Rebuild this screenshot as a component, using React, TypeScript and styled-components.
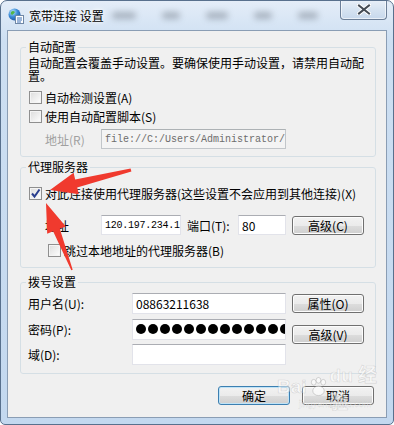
import React from "react";
import styled, { createGlobalStyle } from "styled-components";

const GlobalStyle = createGlobalStyle`
  html, body {
    margin: 0;
    padding: 0;
    background: #ffffff;
  }
  * {
    box-sizing: border-box;
  }
`;

const UI_FONT = `"Noto Sans CJK SC", "Liberation Sans", sans-serif`;

type Pt = [number, number];

// fat tapered arrow, as drawn over the screenshot
const arrowPoints = (
  tail: Pt,
  tip: Pt,
  headLen: number,
  headHalf: number,
  shaftTail: number,
  shaftHead: number
): string => {
  const dx = tip[0] - tail[0];
  const dy = tip[1] - tail[1];
  const len = Math.hypot(dx, dy);
  const ux = dx / len;
  const uy = dy / len;
  const nx = -uy;
  const ny = ux;
  const bx = tip[0] - ux * headLen;
  const by = tip[1] - uy * headLen;
  const pts: Pt[] = [
    [tail[0] + nx * shaftTail, tail[1] + ny * shaftTail],
    [bx + nx * shaftHead, by + ny * shaftHead],
    [bx + nx * headHalf, by + ny * headHalf],
    tip,
    [bx - nx * headHalf, by - ny * headHalf],
    [bx - nx * shaftHead, by - ny * shaftHead],
    [tail[0] - nx * shaftTail, tail[1] - ny * shaftTail],
  ];
  return pts.map((p) => `${p[0].toFixed(1)},${p[1].toFixed(1)}`).join(" ");
};

const PASSWORD_LENGTH = 14;

const App: React.FunctionComponent = (): React.ReactElement => {
  return (
    <>
      <GlobalStyle />
      <Window>
        <TitleBar>
          <TitleIcon />
          <Title>宽带连接 设置</Title>
          <Smudges>
            <Smudge $w={24} />
            <Smudge $w={18} />
            <Smudge $w={22} />
            <Smudge $w={18} />
            <Smudge $w={20} />
          </Smudges>
          <CloseButton aria-label="关闭">
            <CloseGlyph />
          </CloseButton>
        </TitleBar>

        <Client>
          <GroupBox $mb={2}>
            <Legend>自动配置</Legend>
            <Description>
              <span>自动配置会覆盖手动设置。要确保使用手动设置，请禁用自动配</span>
              <span>置。</span>
            </Description>
            <CheckList>
              <CheckRow>
                <CheckBox />
                <span>自动检测设置(A)</span>
              </CheckRow>
              <CheckRow>
                <CheckBox />
                <span>使用自动配置脚本(S)</span>
              </CheckRow>
            </CheckList>
            <FieldRow $indent={17} $mt={3}>
              <FieldLabel $disabled>地址(R)</FieldLabel>
              <TextBox $w={185} $disabled $mono>
                file://C:/Users/Administrator/
              </TextBox>
            </FieldRow>
          </GroupBox>

          <GroupBox $mb={6}>
            <Legend>代理服务器</Legend>
            <CheckRow $mt={9}>
              <CheckBox $checked />
              <span>对此连接使用代理服务器(这些设置不会应用到其他连接)(X)</span>
            </CheckRow>
            <FieldRow $indent={17} $mt={12}>
              <FieldLabel>地址</FieldLabel>
              <TextBox $w={80} $mono $tight>
                120.197.234.1
              </TextBox>
              <PortLabel>端口(T):</PortLabel>
              <TextBox $w={48}>80</TextBox>
              <PushButton $ml={6}>高级(C)</PushButton>
            </FieldRow>
            <CheckRow $indent={19} $mt={6}>
              <CheckBox />
              <span>跳过本地地址的代理服务器(B)</span>
            </CheckRow>
          </GroupBox>

          <GroupBox>
            <Legend>拨号设置</Legend>
            <DialGrid>
              <span>用户名(U):</span>
              <TextBox $w={154} $h={21}>
                08863211638
              </TextBox>
              <PushButton>属性(O)</PushButton>
              <span>密码(P):</span>
              <TextBox $w={154} $h={21} aria-label="密码">
                {Array.from({ length: PASSWORD_LENGTH }, (_, i) => (
                  <Dot key={i} />
                ))}
              </TextBox>
              <PushButton $offset={6}>高级(V)</PushButton>
              <span>域(D):</span>
              <TextBox $w={154} $h={21} />
            </DialGrid>
          </GroupBox>

          <Footer>
            <PushButton $default>确定</PushButton>
            <PushButton>取消</PushButton>
          </Footer>
        </Client>

        <Watermark aria-hidden>
          <WatermarkMain>
            Bai<Paw />du 经验
          </WatermarkMain>
          <WatermarkSub>jingyan.baidu.com</WatermarkSub>
        </Watermark>

        <ArrowLayer width={394} height={425} viewBox="0 0 394 425">
          <polygon
            points={arrowPoints([131, 170], [50, 190], 27, 11, 1.6, 4.2)}
            fill="#f03a2e"
          />
          <polygon
            points={arrowPoints([72, 270], [46, 203], 29, 10, 0.7, 3.6)}
            fill="#f03a2e"
          />
        </ArrowLayer>
      </Window>
    </>
  );
};

const TitleIcon: React.FunctionComponent = () => (
  <svg width="16" height="16" viewBox="0 0 16 16">
    <defs>
      <radialGradient id="globe" cx="0.35" cy="0.3" r="0.8">
        <stop offset="0" stopColor="#bfe8ff" />
        <stop offset="0.5" stopColor="#3a8ad6" />
        <stop offset="1" stopColor="#1d4f9a" />
      </radialGradient>
    </defs>
    <circle cx="6.5" cy="6.5" r="6" fill="url(#globe)" />
    <path d="M3 4 Q5 2 7 4 Q6 6 4 7 Q2 6 3 4Z" fill="#52b548" />
    <path d="M8 7 Q10 6 11 8 Q10 10 8 10Z" fill="#52b548" />
    <rect x="7.5" y="7.5" width="8" height="8" fill="#ffffff" stroke="#6f87a6" />
    <path d="M9 10h5M9 12h5M9 14h4" stroke="#3b6fb6" strokeWidth="1" />
  </svg>
);

const CloseGlyph: React.FunctionComponent = () => (
  <svg width="14" height="11" viewBox="0 0 14 11">
    <path
      d="M1.5 1 L12.5 10 M12.5 1 L1.5 10"
      stroke="#ffffff"
      strokeWidth="4"
      strokeLinecap="round"
    />
    <path
      d="M2 1.5 L12 9.5 M12 1.5 L2 9.5"
      stroke="#454c55"
      strokeWidth="2"
      strokeLinecap="square"
    />
  </svg>
);

const Paw: React.FunctionComponent = () => (
  <svg width="22" height="22" viewBox="0 0 22 22" style={{ margin: "0 1px" }}>
    <g fill="rgba(255,255,255,0.6)" stroke="rgba(120,120,120,0.3)">
      <ellipse cx="6" cy="6" rx="2.5" ry="3" />
      <ellipse cx="11" cy="4" rx="2.5" ry="3" />
      <ellipse cx="16" cy="6" rx="2.5" ry="3" />
      <ellipse cx="11" cy="15" rx="6" ry="5" />
    </g>
  </svg>
);

const CheckBox: React.FunctionComponent<{ $checked?: boolean }> = ({
  $checked,
}) => (
  <Box>
    {$checked && (
      <svg width="11" height="11" viewBox="0 0 11 11">
        <path
          d="M2 5.5 L4.5 8.5 L9.5 1.5"
          fill="none"
          stroke="#2a3f8f"
          strokeWidth="2"
        />
      </svg>
    )}
  </Box>
);

const Window = styled.div`
  position: relative;
  width: 394px;
  height: 425px;
  display: flex;
  flex-direction: column;
  border: 1px solid #58708d;
  border-radius: 7px 7px 5px 5px;
  background: linear-gradient(180deg, #e4edf8 0%, #cddff2 40px, #c3d8ef 100%);
  overflow: hidden;
  font-family: ${UI_FONT};
  font-size: 12px;
  color: #000000;
`;

const TitleBar = styled.div`
  height: 29px;
  display: flex;
  align-items: center;
  padding-left: 7px;
  flex-shrink: 0;
`;

const Title = styled.span`
  margin-left: 5px;
  font-size: 12px;
  color: #000000;
  text-shadow: 0 0 6px #ffffff, 0 0 3px #ffffff;
`;

const Smudges = styled.div`
  display: flex;
  gap: 26px;
  margin-left: 8px;
`;

const Smudge = styled.span<{ $w: number }>`
  width: ${(p) => p.$w}px;
  height: 7px;
  border-radius: 4px;
  background: rgba(70, 78, 90, 0.35);
  filter: blur(3px);
`;

const CloseButton = styled.div`
  align-self: flex-start;
  margin: -1px 6px 0 auto;
  width: 47px;
  height: 20px;
  display: flex;
  align-items: center;
  justify-content: center;
  border: 1px solid #6c7f98;
  border-top: none;
  border-radius: 0 0 4px 4px;
  background: linear-gradient(180deg, #e9f0f8 0%, #d6e3f1 50%, #c7d8ec 100%);
  box-shadow: inset 0 0 0 1px rgba(255, 255, 255, 0.6);
`;

const Client = styled.div`
  flex: 1;
  margin: 0 6px 6px 6px;
  border: 1px solid #8a9db4;
  background: #f0f0f0;
  padding: 8px 10px 0 12px;
  display: flex;
  flex-direction: column;
`;

const GroupBox = styled.fieldset<{ $mb?: number }>`
  margin: 0 0 ${(p) => p.$mb ?? 0}px 0;
  padding: 0 11px 7px 7px;
  border: 1px solid #d5dfe5;
  border-radius: 3px;
  min-width: 0;
`;

const Legend = styled.legend`
  padding: 0 2px;
  margin-left: -2px;
  line-height: 16px;
`;

const Description = styled.p`
  margin: 1px 0 0 0;
  display: flex;
  flex-direction: column;
  white-space: nowrap;

  span {
    height: 13px;
    line-height: 13px;
  }
`;

const CheckList = styled.div`
  margin-top: 6px;
  display: flex;
  flex-direction: column;
`;

const CheckRow = styled.label<{ $indent?: number; $mt?: number }>`
  display: flex;
  align-items: center;
  gap: 3px;
  height: 19px;
  margin-left: ${(p) => (p.$indent ?? 0) + 1}px;
  margin-top: ${(p) => p.$mt ?? 0}px;
  white-space: nowrap;
`;

const Box = styled.span`
  width: 13px;
  height: 13px;
  flex-shrink: 0;
  display: flex;
  align-items: center;
  justify-content: center;
  border: 1px solid #8f8f8f;
  background: linear-gradient(135deg, #dcdcdc 0%, #f4f4f4 70%, #ffffff 100%);
  box-shadow: inset 0 0 0 1px #f4f4f4;
`;

const FieldRow = styled.div<{ $indent?: number; $mt?: number }>`
  display: flex;
  align-items: center;
  margin-left: ${(p) => p.$indent ?? 0}px;
  margin-top: ${(p) => p.$mt ?? 0}px;
`;

const FieldLabel = styled.span<{ $disabled?: boolean }>`
  width: 56px;
  color: ${(p) => (p.$disabled ? "#a0a0a0" : "#000000")};
`;

const PortLabel = styled.span`
  margin-left: 6px;
  width: 51px;
`;

const TextBox = styled.div<{
  $w: number;
  $h?: number;
  $disabled?: boolean;
  $mono?: boolean;
  $tight?: boolean;
}>`
  width: ${(p) => p.$w}px;
  height: ${(p) => p.$h ?? 20}px;
  display: flex;
  align-items: center;
  gap: 2px;
  padding: 0 2px 0 3px;
  overflow: hidden;
  white-space: nowrap;
  border: 1px solid ${(p) => (p.$disabled ? "#c2c6ca" : "#e2e3ea")};
  border-top-color: ${(p) => (p.$disabled ? "#adb2b5" : "#abadb3")};
  background: ${(p) => (p.$disabled ? "#f4f4f4" : "#ffffff")};
  color: ${(p) => (p.$disabled ? "#6d6d6d" : "#000000")};
  font-family: ${(p) =>
    p.$mono ? `"Liberation Mono", "DejaVu Sans Mono", monospace` : "inherit"};
  font-size: ${(p) => (p.$mono ? "10px" : "12px")};
  letter-spacing: ${(p) => (p.$tight ? "-0.25px" : "0")};
`;

const Dot = styled.span`
  width: 10px;
  height: 10px;
  flex-shrink: 0;
  border-radius: 50%;
  background: #000000;
`;

const PushButton = styled.button<{
  $default?: boolean;
  $ml?: number;
  $offset?: number;
}>`
  width: 72px;
  height: 19px;
  padding: 0;
  margin-left: ${(p) => p.$ml ?? 0}px;
  margin-top: ${(p) => p.$offset ?? 0}px;
  align-self: ${(p) => (p.$offset ? "start" : "center")};
  font-family: ${UI_FONT};
  font-size: 12px;
  line-height: 17px;
  color: #000000;
  border: 1px solid ${(p) => (p.$default ? "#3c7fb1" : "#707070")};
  border-radius: 3px;
  background: linear-gradient(
    180deg,
    #f2f2f2 0%,
    #ebebeb 50%,
    #dddddd 51%,
    #cfcfcf 100%
  );
  box-shadow: inset 0 0 0 1px ${(p) => (p.$default ? "#bfe3f7" : "#fcfcfc")};
`;

const DialGrid = styled.div`
  display: grid;
  grid-template-columns: 98px 154px 72px;
  grid-auto-rows: 21px;
  column-gap: 6px;
  row-gap: 4.5px;
  align-items: center;
  margin-top: 3px;
  padding-bottom: 1px;
`;

const Footer = styled.div`
  display: flex;
  justify-content: flex-end;
  gap: 12px;
  margin-top: 12px;
  padding-right: 2px;
`;

const Watermark = styled.div`
  position: absolute;
  left: 276px;
  top: 374px;
  display: flex;
  flex-direction: column;
  align-items: center;
  pointer-events: none;
`;

const WatermarkMain = styled.div`
  display: flex;
  align-items: center;
  height: 24px;
  font-family: "Liberation Sans", "Noto Sans CJK SC", sans-serif;
  font-size: 19px;
  font-weight: bold;
  color: rgba(255, 255, 255, 0.5);
  -webkit-text-stroke: 0.6px rgba(140, 140, 140, 0.3);
`;

const WatermarkSub = styled.div`
  line-height: 11px;
  font-family: "Liberation Sans", sans-serif;
  font-size: 9px;
  color: rgba(255, 255, 255, 0.55);
  -webkit-text-stroke: 0.3px rgba(140, 140, 140, 0.3);
`;

const ArrowLayer = styled.svg`
  position: absolute;
  left: -1px;
  top: -1px;
  pointer-events: none;
`;

export default App;
